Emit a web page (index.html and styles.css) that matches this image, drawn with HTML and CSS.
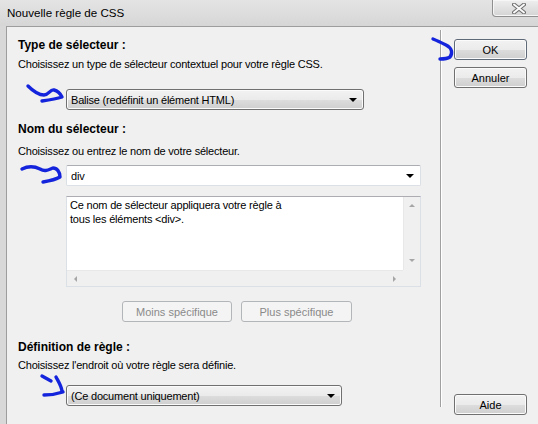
FILE: index.html
```html
<!DOCTYPE html>
<html lang="fr">
<head>
  <meta charset="UTF-8" />
  <title>Nouvelle règle de CSS</title>
  <link rel="stylesheet" href="styles.css">
</head>
<body>
  <div class="window">
    <div class="titlebar">
      <span class="title">Nouvelle règle de CSS</span>
      <span class="close">
        <svg width="14" height="11" viewBox="0 0 14 11">
          <path d="M2,1.5 L12,9.5 M12,1.5 L2,9.5" stroke="#6f6f6f" stroke-width="4" stroke-linecap="round" fill="none"/>
          <path d="M2,1.5 L12,9.5 M12,1.5 L2,9.5" stroke="#fafafa" stroke-width="2" stroke-linecap="round" fill="none"/>
        </svg>
      </span>
    </div>

    <div class="frame">
      <div class="client">
        <div class="form-pane">
          <h3>Type de sélecteur :</h3>
          <p class="hint">Choisissez un type de sélecteur contextuel pour votre règle CSS.</p>
          <div class="dropdown dd-type">
            <span>Balise (redéfinit un élément HTML)</span>
            <i class="caret"></i>
          </div>

          <h3 class="h-name">Nom du sélecteur :</h3>
          <p class="hint hint-name">Choisissez ou entrez le nom de votre sélecteur.</p>
          <div class="combo">
            <span>div</span>
            <i class="caret"></i>
          </div>

          <div class="info-box">
            <div class="info-text">Ce nom de sélecteur appliquera votre règle à<br>tous les éléments &lt;div&gt;.</div>
            <div class="vbar">
              <i class="arr arr-up"></i>
              <i class="arr arr-down"></i>
            </div>
            <div class="hbar">
              <i class="arr arr-left"></i>
              <i class="arr arr-right"></i>
            </div>
            <div class="corner"></div>
          </div>

          <div class="spec-row">
            <button class="btn btn-off spec-less">Moins spécifique</button>
            <button class="btn btn-off spec-more">Plus spécifique</button>
          </div>

          <h3 class="h-def">Définition de règle :</h3>
          <p class="hint hint-def">Choisissez l'endroit où votre règle sera définie.</p>
          <div class="dropdown dd-where">
            <span>(Ce document uniquement)</span>
            <i class="caret"></i>
          </div>
        </div>

        <div class="divider"></div>

        <div class="button-pane">
          <button class="btn btn-default">OK</button>
          <button class="btn btn-cancel">Annuler</button>
          <button class="btn btn-help">Aide</button>
        </div>
      </div>
    </div>

    <!-- hand-drawn pointers -->
    <svg class="marks" width="538" height="424" viewBox="0 0 538 424">
      <g fill="none" stroke="#1424dc" stroke-width="3.4" stroke-linecap="round" stroke-linejoin="round">
        <path d="M28,86 C33,91 38,95 44,95 C49,95 50,89 54,90 C58,91 61,95 62,97 C56,99 49,100 42,101"/>
        <path d="M433,39 C438,41 442,43 446,45 C452,48 453,53 450,57 C447,59 444,59 440,59"/>
        <path d="M22,169 C28,166 34,166 40,169 C45,172 48,170 53,168 C57,168 60,172 60,177 C55,180 49,181 43,182"/>
        <path d="M42,376 L51,381"/>
        <path d="M56,377 C58,381 61,385 62,391"/>
        <path d="M44,395 C50,395 57,394 63,392"/>
      </g>
    </svg>
  </div>
</body>
</html>
```

FILE: styles.css
```css
* {
  margin: 0;
  padding: 0;
  box-sizing: border-box;
}

body {
  font-family: "Liberation Sans", Arial, sans-serif;
  font-size: 11px;
  color: #000;
  background: #f0f0f0;
}

.window {
  position: relative;
  width: 538px;
  height: 424px;
  overflow: hidden;
  display: flex;
  flex-direction: column;
  background: #d8d8d8;
}

/* title bar */
.titlebar {
  height: 26px;
  display: flex;
  justify-content: space-between;
  align-items: flex-start;
  background: linear-gradient(#e4e4e4, #d6d6d6);
}

.title {
  font-size: 11.6px;
  line-height: 14px;
  padding: 6px 0 0 7px;
}

.close {
  width: 53px;
  height: 17px;
  margin-right: -7px;
  display: flex;
  justify-content: center;
  align-items: center;
  border: 1px solid #8f8f8f;
  border-top: none;
  border-radius: 0 0 4px 4px;
  background: linear-gradient(#efefef, #d4d4d4);
  box-shadow: inset 0 0 0 1px #f6f6f6;
}

.frame {
  flex: 1;
  display: flex;
  padding-left: 6px;
}

.client {
  flex: 1;
  display: flex;
  background: #f0f0f0;
  border-left: 1px solid #9d9d9d;
  border-top: 1px solid #9d9d9d;
}

/* left side: the form */
.form-pane {
  width: 433px;
  padding: 11px 0 0 11px;
  letter-spacing: -0.2px;
}

h3 {
  font-size: 12px;
  line-height: 14px;
  font-weight: bold;
  letter-spacing: 0;
}

.hint {
  line-height: 14px;
  margin-top: 5px;
}

.h-name { margin-top: 12px; }
.hint-name { margin-top: 8px; }
.h-def { margin-top: 18px; }
.hint-def { margin-top: 4px; }

.dropdown,
.combo {
  height: 21px;
  margin-left: 48px;
  display: flex;
  align-items: center;
  justify-content: space-between;
  padding: 0 6px 0 4px;
  line-height: 14px;
}

.dropdown {
  border: 1px solid #707070;
  border-radius: 3px;
  background: linear-gradient(#f2f2f2 0%, #ebebeb 50%, #dddddd 51%, #cfcfcf 100%);
  box-shadow: inset 0 0 0 1px #fbfbfb;
}

.dd-type {
  width: 298px;
  margin-top: 18px;
}

.dd-where {
  width: 276px;
  margin-top: 13px;
}

.combo {
  width: 355px;
  margin-top: 7px;
  background: #fff;
  border: 1px solid #dbdfe6;
  border-top-color: #abadb3;
  border-radius: 2px;
}

.caret {
  width: 0;
  height: 0;
  border-left: 4px solid transparent;
  border-right: 4px solid transparent;
  border-top: 4px solid #000;
}

/* read-only description with scroll bars */
.info-box {
  width: 355px;
  height: 91px;
  margin: 10px 0 0 48px;
  display: grid;
  grid-template-columns: 1fr 17px;
  grid-template-rows: 1fr 16px;
  background: #fff;
  border: 1px solid #dbdfe6;
  border-top-color: #abadb3;
}

.info-text {
  padding: 1px 3px;
  line-height: 14px;
}

.vbar,
.hbar,
.corner {
  background: #f0f0f0;
}

.vbar {
  display: flex;
  flex-direction: column;
  justify-content: space-between;
  align-items: center;
  padding: 7px 0 8px;
  border-left: 1px solid #e8e8e8;
}

.hbar {
  display: flex;
  justify-content: space-between;
  align-items: center;
  padding: 0 7px 0 7px;
  border-top: 1px solid #e8e8e8;
}

.arr {
  width: 0;
  height: 0;
  border: 3px solid transparent;
}

.arr-up { border-bottom: 3px solid #a6a6a6; border-top-width: 0; }
.arr-down { border-top: 3px solid #a6a6a6; border-bottom-width: 0; }
.arr-left { border-right: 3px solid #a6a6a6; border-left-width: 0; }
.arr-right { border-left: 3px solid #a6a6a6; border-right-width: 0; }

.spec-row {
  display: flex;
  gap: 9px;
  margin: 14px 0 0 104px;
}

/* buttons */
.btn {
  height: 21px;
  font-family: inherit;
  font-size: 11px;
  color: #000;
  border: 1px solid #707070;
  border-radius: 3px;
  background: linear-gradient(#f2f2f2 0%, #ebebeb 50%, #dddddd 51%, #cfcfcf 100%);
  box-shadow: inset 0 0 0 1px #fbfbfb;
}

.btn-off {
  color: #8a8a8a;
  border-color: #b3b6b9;
  background: #f4f4f4;
  box-shadow: none;
}

.spec-less { width: 110px; }
.spec-more { width: 111px; }

.divider {
  width: 2px;
  height: 377px;
  margin-top: 3px;
  border-left: 1px solid #a0a0a0;
  border-right: 1px solid #fff;
}

.button-pane {
  display: flex;
  flex-direction: column;
  padding: 12px 0 0 12px;
}

.button-pane .btn {
  width: 73px;
}

.btn-default {
  border-color: #5f6a78;
}

.btn-cancel { margin-top: 7px; }
.btn-help { margin-top: 306px; }

.marks {
  position: absolute;
  top: 0;
  left: 0;
  pointer-events: none;
}
```
